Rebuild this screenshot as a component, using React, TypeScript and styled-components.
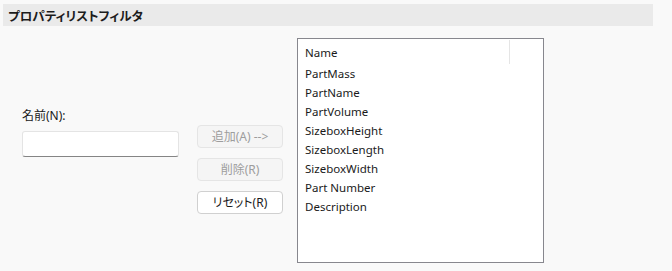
import * as React from 'react';
import styled, { createGlobalStyle } from 'styled-components';

const GlobalStyle = createGlobalStyle`
  html, body {
    margin: 0;
    padding: 0;
    background: #f9f9f9;
  }
  body {
    font-family: "Noto Sans", "Noto Sans CJK JP", sans-serif;
    color: #1a1a1a;
  }
`;

const Page = styled.div`
  width: 672px;
  height: 271px;
  padding-top: 4px;
  box-sizing: border-box;
`;

const TitleBar = styled.div`
  margin: 0 19px 0 3px;
  height: 22px;
  background: #eaeaea;
  display: flex;
  align-items: center;
  padding-left: 5px;
`;

const Title = styled.h1`
  margin: 0;
  font-size: 12.5px;
  font-weight: bold;
  font-family: "Noto Sans CJK JP", sans-serif;
  font-feature-settings: "palt";
  color: #1c1c1c;
`;

const Body = styled.div`
  display: flex;
  align-items: flex-start;
  padding: 12px 0 0 22px;
`;

const NameColumn = styled.div`
  display: flex;
  flex-direction: column;
  width: 157px;
  padding-top: 70px;
`;

const Label = styled.label`
  font-size: 12px;
  font-family: "Noto Sans", "Noto Sans CJK JP", sans-serif;
  font-feature-settings: "palt";
  color: #1a1a1a;
  line-height: 16px;
  margin-bottom: 7px;
`;

const TextBox = styled.input`
  box-sizing: border-box;
  width: 157px;
  height: 26px;
  border: 1px solid #e4e4e4;
  border-bottom: 1px solid #858585;
  border-radius: 3px;
  background: #fff;
  outline: none;
  padding: 0 6px;
  font-size: 12px;
`;

const ButtonColumn = styled.div`
  display: flex;
  flex-direction: column;
  gap: 10px;
  margin-left: 18px;
  padding-top: 87px;
`;

const Button = styled.button<{ $disabled?: boolean }>`
  box-sizing: border-box;
  width: 86px;
  height: 23px;
  padding: 0;
  border-radius: 4px;
  border: 1px solid ${(p) => (p.$disabled ? '#e5e5e5' : '#d0d0d0')};
  background: ${(p) => (p.$disabled ? '#f5f5f5' : '#ffffff')};
  color: ${(p) => (p.$disabled ? '#9d9d9d' : '#1a1a1a')};
  font-size: 12px;
  font-family: "Noto Sans", "Noto Sans CJK JP", sans-serif;
  font-feature-settings: "palt";
  line-height: 21px;
  text-align: center;
`;

const ListBox = styled.div`
  box-sizing: border-box;
  width: 247px;
  height: 225px;
  margin-left: 14px;
  border: 1px solid #87878e;
  background: #fff;
`;

const HeaderRow = styled.div`
  display: flex;
  height: 25px;
  align-items: stretch;
`;

const HeaderCell = styled.div`
  width: 212px;
  box-sizing: border-box;
  padding-left: 7px;
  display: flex;
  align-items: center;
  font-size: 11.5px;
  border-right: 1px solid #e5e5e5;
  margin: 1px 0 0 0;
`;

const Row = styled.div`
  height: 19px;
  line-height: 19px;
  padding-left: 7px;
  font-size: 11.5px;
  color: #1a1a1a;
`;

const items = [
  'PartMass',
  'PartName',
  'PartVolume',
  'SizeboxHeight',
  'SizeboxLength',
  'SizeboxWidth',
  'Part Number',
  'Description',
];

export default function App() {
  return (
    <Page>
      <GlobalStyle />
      <TitleBar>
        <Title>プロパティリストフィルタ</Title>
      </TitleBar>
      <Body>
        <NameColumn>
          <Label>名前(N):</Label>
          <TextBox />
        </NameColumn>
        <ButtonColumn>
          <Button $disabled>追加(A) --&gt;</Button>
          <Button $disabled>削除(R)</Button>
          <Button>リセット(R)</Button>
        </ButtonColumn>
        <ListBox>
          <HeaderRow>
            <HeaderCell>Name</HeaderCell>
          </HeaderRow>
          {items.map((item) => (
            <Row key={item}>{item}</Row>
          ))}
        </ListBox>
      </Body>
    </Page>
  );
}
